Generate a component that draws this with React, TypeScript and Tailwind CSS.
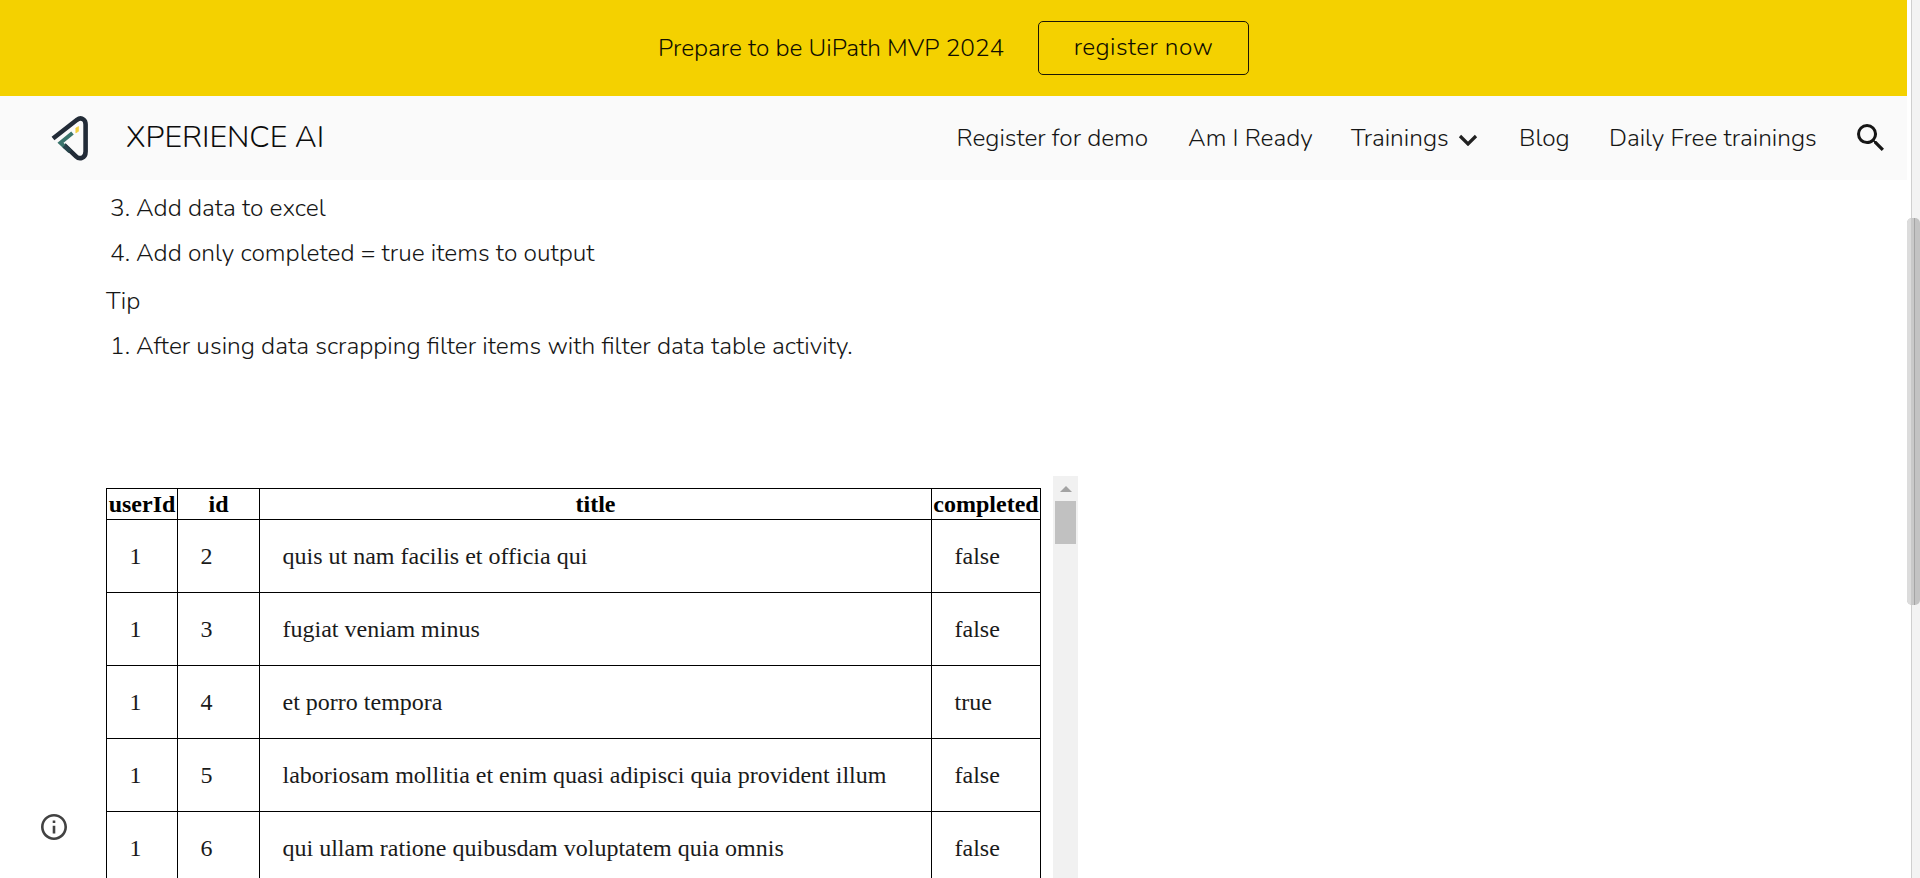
import React from "react";

const rows: [number, number, string, string][] = [
  [1, 2, "quis ut nam facilis et officia qui", "false"],
  [1, 3, "fugiat veniam minus", "false"],
  [1, 4, "et porro tempora", "true"],
  [1, 5, "laboriosam mollitia et enim quasi adipisci quia provident illum", "false"],
  [1, 6, "qui ullam ratione quibusdam voluptatem quia omnis", "false"],
];

function Logo() {
  return (
    <svg className="ml-[50px] h-[50px] w-[42px] shrink-0" viewBox="0 0 42 50" fill="none">
      <path d="M3 25.500L27 6.800Q30.500 4.200 33.500 6.500Q35.600 8 35.600 11.500V38.500Q35.600 43.500 32 44.800Q28.800 46 26 43.300L14 31.800" stroke="#222b37" strokeWidth="4.600" />
      <path d="M22.500 20L10.500 29.800L15 34" stroke="#3a746c" strokeWidth="4" />
      <path d="M14 33L20 38.500" stroke="#26434a" strokeWidth="4.400" />
      <path d="M25.800 15L28.600 13.500V18.200L25.800 20Z" fill="#f2cf3c" stroke="#f2cf3c" strokeWidth="0.600" />
    </svg>
  );
}

function Banner() {
  return (
    <div className="flex h-24 w-full shrink-0 items-start bg-[#f4d100] pl-[658px] text-[24.400px] text-[#110e00]">
      <span className="mt-[30px] w-[380px] leading-9">Prepare to be UiPath MVP 2024</span>
      <button className="mt-[21px] flex h-[54px] w-[211px] items-center justify-center rounded-[5px] border border-[#1b1705] pb-0.5 leading-9 tracking-[0.4px]">
        register now
      </button>
    </div>
  );
}

function Nav() {
  return (
    <header className="flex h-[84px] w-full shrink-0 items-center bg-[#fafafa] text-[24.450px] text-[#161616]">
      <Logo />
      <span className="-mt-0.5 ml-[34px] w-[830.5px] shrink-0 text-[30.400px] leading-10 text-[#0c0c0c]">XPERIENCE AI</span>
      <nav className="flex items-center leading-9 whitespace-nowrap">
        <a className="w-[231.500px]">Register for demo</a>
        <a className="w-[163px]">Am I Ready</a>
        <a className="flex w-[168px] items-center">
          <span className="w-[107px]">Trainings</span>
          <svg className="mt-[3px] h-[12px] w-[20px]" viewBox="0 0 20 12" fill="none">
            <path d="M2 2L10 10L18 2" stroke="#212121" strokeWidth="3.200" />
          </svg>
        </a>
        <a className="w-[90px]">Blog</a>
        <a className="w-[248px]">Daily Free trainings</a>
      </nav>
      <svg className="-mt-0.5 h-[27px] w-[27px] shrink-0" viewBox="3 3 17.490 17.490" fill="#161616">
        <path d="M15.500 14h-.79l-.28-.27A6.471 6.471 0 0 0 16 9.500 6.500 6.500 0 1 0 9.500 16c1.610 0 3.090-.59 4.230-1.570l.27.28v.79l5 4.990L20.490 19l-4.990-5zm-6 0C7.010 14 5 11.990 5 9.500S7.010 5 9.500 5 14 7.010 14 9.500 11.990 14 9.500 14z" />
      </svg>
    </header>
  );
}

function Item({ n, children }: { n: number; children: string }) {
  return (
    <li className="flex h-[45px] pl-1">
      <span className="w-[26px]">{n}.</span>
      <span>{children}</span>
    </li>
  );
}

function DataTable() {
  return (
    <table className="w-[935px] table-fixed border-collapse font-['Liberation_Serif','Times_New_Roman',serif] text-[24px] leading-[30px] text-black">
      <colgroup>
        <col className="w-[71px]" />
        <col className="w-[82px]" />
        <col className="w-[672px]" />
        <col className="w-[109px]" />
      </colgroup>
      <thead>
        <tr className="h-[31px]">
          {["userId", "id", "title", "completed"].map((h) => (
            <th key={h} className="border border-black p-0 font-bold">{h}</th>
          ))}
        </tr>
      </thead>
      <tbody>
        {rows.map((r) => (
          <tr key={r[1]} className="h-[73px]">
            {r.map((c, i) => (
              <td key={i} className="border border-black py-0 pr-0 pl-[22.500px] text-[#1a1a1a]">{c}</td>
            ))}
          </tr>
        ))}
      </tbody>
    </table>
  );
}

export default function App() {
  return (
    <div className="flex h-[878px] w-full overflow-hidden bg-white font-['Nunito','Nunito_Sans','Lato',sans-serif] font-light">
      <div className="relative flex w-[1907px] shrink-0 flex-col">
        <Banner />
        <Nav />
        <main className="flex flex-col pl-[106px] text-[24.500px] leading-9 text-[#161616]">
          <ol className="mt-[10px]">
            <Item n={3}>Add data to excel</Item>
            <Item n={4}>Add only completed = true items to output</Item>
          </ol>
          <p className="mt-[3px] h-[45px]">Tip</p>
          <ol>
            <Item n={1}>After using data scrapping filter items with filter data table activity.</Item>
          </ol>
          <div className="mt-[103px] flex h-[402px] w-[972px] justify-between overflow-hidden">
            <div className="pt-3">
              <DataTable />
            </div>
            <div className="flex w-[25px] flex-col items-center bg-[#f1f1f1]">
              <svg className="mt-2.5 h-[6px] w-[12px] shrink-0" viewBox="0 0 12 6" fill="#a3a3a3">
                <path d="M0 6L6 0L12 6Z" />
              </svg>
              <div className="mt-[9px] h-[43px] w-[21px] shrink-0 bg-[#c1c1c1]" />
            </div>
          </div>
        </main>
        <svg className="absolute top-[814px] left-[41px] h-[26px] w-[26px]" viewBox="2 2 20 20" fill="#424242">
          <path d="M11 7h2v2h-2zm0 4h2v6h-2zm1-9C6.480 2 2 6.480 2 12s4.480 10 10 10 10-4.480 10-10S17.520 2 12 2zm0 18c-4.410 0-8-3.590-8-8s3.590-8 8-8 8 3.590 8 8-3.590 8-8 8z" />
        </svg>
      </div>
      <div className="relative flex w-[13px] shrink-0 pl-1">
        <div className="w-[9px] border-l border-[#cfcfcf] bg-[#f3f3f3]" />
        <div className="absolute top-[218px] left-0 flex h-[387px] w-[13px] overflow-hidden rounded-[5px] bg-[#c3c3c3]">
          <div className="w-1 bg-[#dcdcdc]" />
          <div className="w-[3px] bg-[#c9c9c9]" />
          <div className="w-px bg-[#a5a5a5]" />
        </div>
      </div>
    </div>
  );
}
